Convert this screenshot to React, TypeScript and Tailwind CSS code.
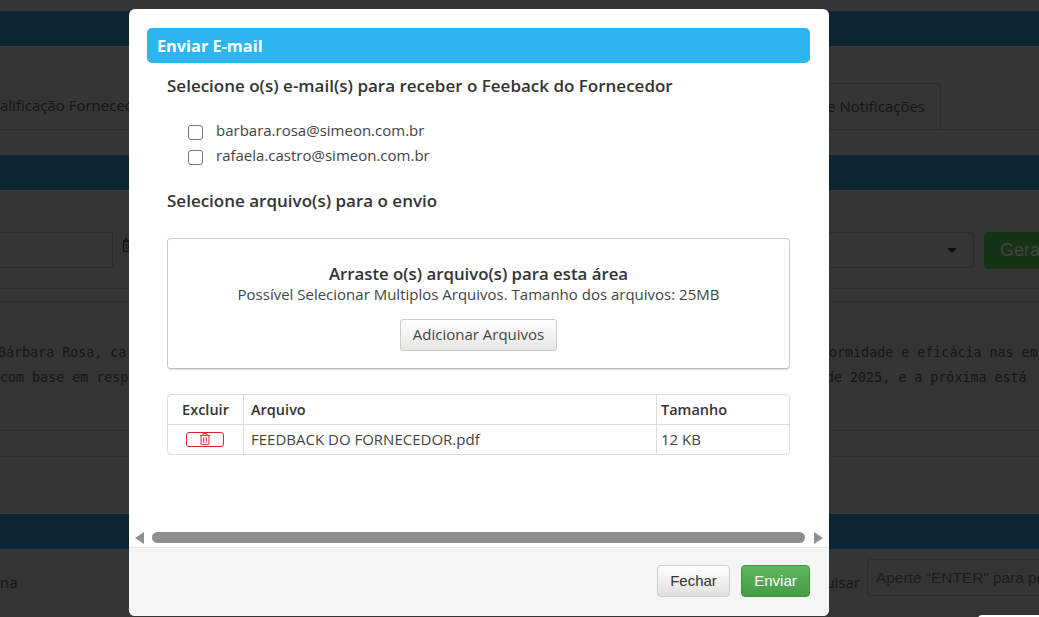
import { FaRegCalendarAlt, FaRegTrashAlt } from 'react-icons/fa'

const modalFont = { fontFamily: '"Open Sans", sans-serif' }

function BlueBar({ className }: { className: string }) {
  return <div className={`h-[35px] shrink-0 bg-[#0b2533] ${className}`} />
}

function Background() {
  return (
    <div
      className="h-[617px] w-[1039px] overflow-hidden bg-[#353535] flex flex-col text-[#141414]"
      style={modalFont}
    >
      <BlueBar className="mt-[11px]" />
      {/* tabs */}
      <div className="mt-[37px] h-[47px] shrink-0 border-b border-[#2c2c2c] flex text-[15px]">
        <div className="w-[829px] shrink-0 pt-[11px] whitespace-nowrap">alificação Fornecedor</div>
        <div className="w-[112px] shrink-0 h-[47px] pt-[11px] pr-[15px] flex justify-end border-r border-t border-[#2c2c2c] rounded-tr whitespace-nowrap">
          e Notificações
        </div>
      </div>
      <BlueBar className="mt-[25px]" />
      {/* filters */}
      <div className="mt-[42px] h-[37px] shrink-0 flex">
        <div className="w-[113px] shrink-0 h-[36px] border border-[#2c2c2c] border-l-0" />
        <div className="w-[60px] shrink-0 h-[36px] pl-[9px] pt-[6px] text-[#141414]">
          <FaRegCalendarAlt size={14} />
        </div>
        <div className="ml-[656px] w-[145px] shrink-0 h-[36px] border border-[#2c2c2c] border-l-0 rounded-r flex items-center justify-end pr-[16px]">
          <div className="w-0 h-0 border-x-[5px] border-x-transparent border-t-[5px] border-t-[#0c0c0c]" />
        </div>
        <div
          className="ml-[10px] w-[80px] shrink-0 h-[37px] bg-[#143414] rounded-l pl-[16px] text-[18px] leading-[36px] text-[#444] whitespace-nowrap"
          style={{ fontFamily: '"Liberation Sans", sans-serif' }}
        >
          Gerar
        </div>
      </div>
      <div className="mt-[19px] h-[14px] shrink-0 border-y border-[#2e2e2e]" />
      {/* observation text */}
      <div
        className="mt-[38px] h-[50px] shrink-0 text-[13.33px] leading-[25px] whitespace-nowrap"
        style={{ fontFamily: '"DejaVu Sans Mono", monospace' }}
      >
        <div className="flex">
          <span className="w-[829px] shrink-0 -ml-[2px]">Bárbara Rosa, ca</span>
          <span className="-ml-[6px]">formidade e eficácia nas em</span>
        </div>
        <div className="flex">
          <span className="w-[829px] shrink-0">com base em resp</span>
          <span className="-ml-[3px]">de 2025, e a próxima está</span>
        </div>
      </div>
      <div className="mt-[40px] h-[27px] shrink-0 border-y border-[#2e2e2e]" />
      <BlueBar className="mt-[57px]" />
      {/* grid header */}
      <div className="mt-[10px] h-[37px] shrink-0 flex text-[15px]">
        <div className="w-[860px] shrink-0 pt-[12px] flex justify-between whitespace-nowrap">
          <span>na</span>
          <span>Pesquisar</span>
        </div>
        <div
          className="ml-[7px] w-[240px] h-[37px] shrink-0 border border-[#2c2c2c] rounded pl-[8px] text-[15.4px] leading-[35px] text-[#1c1c1c] whitespace-nowrap"
          style={{ fontFamily: '"Liberation Sans", sans-serif' }}
        >
          Aperte "ENTER" para pesquisar
        </div>
      </div>
      <div className="mt-[19px] ml-[978px] h-[4px] shrink-0 bg-white rounded-tl" />
    </div>
  )
}

function EmailRow({ email }: { email: string }) {
  return (
    <label className="flex h-[25px] items-center">
      <input
        type="checkbox"
        className="appearance-none w-[15px] h-[15px] ml-[21px] mt-[1px] rounded-[3px] border border-[#767676] bg-white"
      />
      <span className="ml-[13px] text-[15px] text-[#444] -mt-[3px]">{email}</span>
    </label>
  )
}

function Modal() {
  return (
    <div
      className="absolute left-[129px] top-[9px] w-[700px] h-[607px] bg-white rounded-md flex flex-col overflow-hidden"
      style={modalFont}
    >
      <div className="flex-1 min-h-0 px-[18px] pt-[19px]">
        <div className="h-[35px] w-[663px] bg-[#2bb6ef] rounded-[5px] pl-[10px] text-[16.3px] font-bold leading-[36px] text-white">
          Enviar E-mail
        </div>
        <div className="pl-[20px] w-[643px] text-[#333]">
          <h4 className="mt-[11px] text-[17px] leading-[24px] font-semibold text-[#333]">
            Selecione o(s) e-mail(s) para receber o Feeback do Fornecedor
          </h4>
          <div className="mt-[21px]">
            <EmailRow email="barbara.rosa@simeon.com.br" />
            <EmailRow email="rafaela.castro@simeon.com.br" />
          </div>
          <h4 className="mt-[20px] text-[17px] leading-[24px] font-semibold text-[#333]">
            Selecione arquivo(s) para o envio
          </h4>
          {/* drop zone */}
          <div className="mt-[25px] h-[131px] w-[623px] border border-[#ccc] border-b-[#bbb] rounded-[4px] shadow-[0_1px_1px_rgba(0,0,0,0.12)] flex flex-col items-center pt-[24px]">
            <div className="text-[16.8px] leading-[22px] font-semibold text-[#333]">
              Arraste o(s) arquivo(s) para esta área
            </div>
            <div className="text-[15px] leading-[19px] text-[#444]">
              Possível Selecionar Multiplos Arquivos. Tamanho dos arquivos: 25MB
            </div>
            <button className="mt-[15px] h-[32px] w-[157px] border border-[#ccc] rounded-[3px] bg-gradient-to-b from-white to-[#e6e6e6] pb-[2px] text-[15px] text-[#444]">
              Adicionar Arquivos
            </button>
          </div>
          {/* attachments */}
          <table className="mt-[25px] w-[623px] border-separate border-spacing-0 border border-[#ddd] rounded-[4px] text-[15px] text-[#444] table-fixed">
            <thead>
              <tr className="h-[30px] text-[#333] text-[14.5px]">
                <th className="w-[75px] font-semibold text-center border-b border-[#ddd]">Excluir</th>
                <th className="w-[413px] pl-[7px] font-semibold text-left border-b border-l border-[#ddd]">Arquivo</th>
                <th className="pl-[4px] font-semibold text-left border-b border-l border-[#ddd]">Tamanho</th>
              </tr>
            </thead>
            <tbody>
              <tr className="h-[29px]">
                <td className="text-center pr-[2px] pb-[4px]">
                  <span className="inline-flex w-[38px] h-[15px] items-center justify-center border border-[#d9252b] rounded-[3px] text-[#e0474c] align-middle">
                    <FaRegTrashAlt size={12} />
                  </span>
                </td>
                <td className="pl-[7px] pb-[1px] border-l border-[#ddd]">FEEDBACK DO FORNECEDOR.pdf</td>
                <td className="pl-[4px] pb-[1px] border-l border-[#ddd]">12 KB</td>
              </tr>
            </tbody>
          </table>
        </div>
      </div>
      {/* horizontal scroll bar */}
      <div className="h-[15px] shrink-0 flex items-center pl-[6px] pr-[6px]">
        <div className="w-0 h-0 border-y-[6px] border-y-transparent border-r-[9px] border-r-[#8f8f8f]" />
        <div className="ml-[8px] w-[653px] h-[11px] rounded-full bg-[#8f8f8f]" />
        <div className="ml-[9px] w-0 h-0 border-y-[6px] border-y-transparent border-l-[9px] border-l-[#8f8f8f]" />
      </div>
      {/* footer */}
      <div
        className="h-[69px] shrink-0 mt-[2px] border-t border-[#e5e5e5] bg-[#f5f5f5] flex justify-end gap-[11px] pt-[17px] pr-[19px] text-[15px]"
        style={{ fontFamily: '"Liberation Sans", sans-serif' }}
      >
        <button className="h-[32px] w-[73px] border border-[#ccc] rounded-[4px] bg-gradient-to-b from-white to-[#e0e0e0] text-[#333]">
          Fechar
        </button>
        <button className="h-[32px] w-[69px] border border-[#3e8f3e] rounded-[4px] bg-gradient-to-b from-[#5fb760] to-[#469c46] text-white">
          Enviar
        </button>
      </div>
    </div>
  )
}

export default function App() {
  return (
    <div className="relative h-[617px] w-[1039px] overflow-hidden">
      <Background />
      <Modal />
    </div>
  )
}
